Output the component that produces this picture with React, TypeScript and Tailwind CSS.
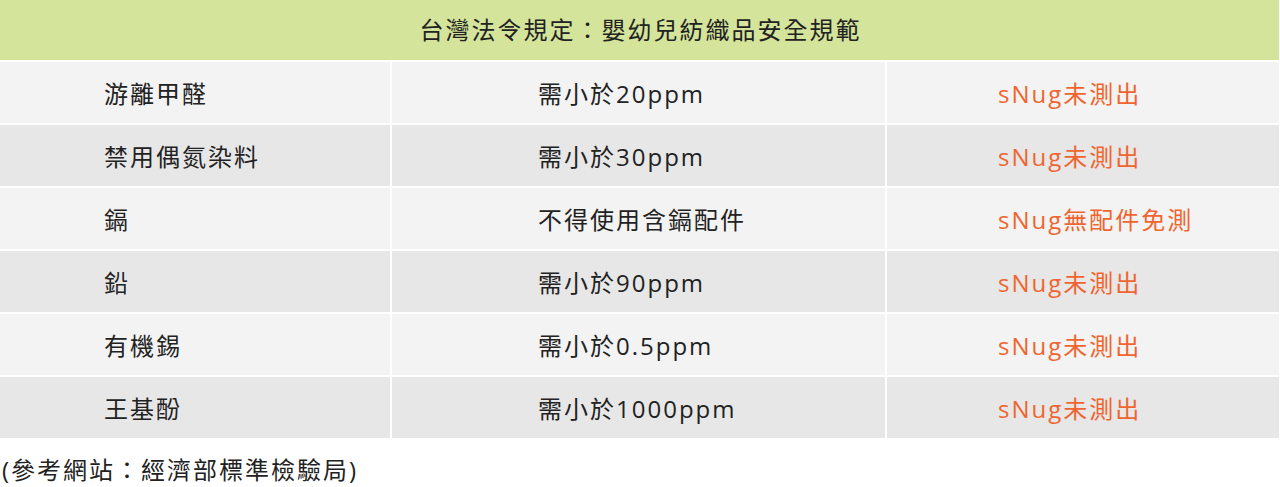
const rows = [
  { item: "游離甲醛", rule: "需小於20ppm", result: "sNug未測出" },
  { item: "禁用偶氮染料", rule: "需小於30ppm", result: "sNug未測出" },
  { item: "鎘", rule: "不得使用含鎘配件", result: "sNug無配件免測" },
  { item: "鉛", rule: "需小於90ppm", result: "sNug未測出" },
  { item: "有機錫", rule: "需小於0.5ppm", result: "sNug未測出" },
  { item: "王基酚", rule: "需小於1000ppm", result: "sNug未測出" },
]

const font = { fontFamily: '"Open Sans", "Noto Sans CJK TC", sans-serif' }

export default function App() {
  return (
    <div className="w-[1280px] h-[487px] bg-white text-[#222]" style={font}>
      <div className="grid grid-cols-[390px_493px_392px] gap-[2px] pr-[1px]">
        <div className="col-span-3 h-[60px] bg-[#d4e49a] flex items-center justify-center text-[24px] tracking-[2px] pl-[2px]">
          台灣法令規定：嬰幼兒紡織品安全規範
        </div>
        {rows.map((r, i) => {
          const bg = i % 2 === 0 ? "bg-[#f3f3f3]" : "bg-[#e7e7e7]"
          return [
            <div key={r.item + "a"} className={`${bg} h-[61px] flex items-center pl-[104px] pt-[2px] text-[24px] tracking-[2px]`}>
              {r.item}
            </div>,
            <div key={r.item + "b"} className={`${bg} h-[61px] flex items-center pl-[146px] pt-[2px] text-[24px] tracking-[2px]`}>
              {r.rule}
            </div>,
            <div key={r.item + "c"} className={`${bg} h-[61px] flex items-center pl-[111px] pt-[2px] text-[24px] tracking-[2px] text-[#f0652f]`}>
              {r.result}
            </div>,
          ]
        })}
      </div>
      <p className="mt-[14px] pl-[2px] text-[24px] tracking-[2px]">(參考網站：經濟部標準檢驗局)</p>
    </div>
  )
}
